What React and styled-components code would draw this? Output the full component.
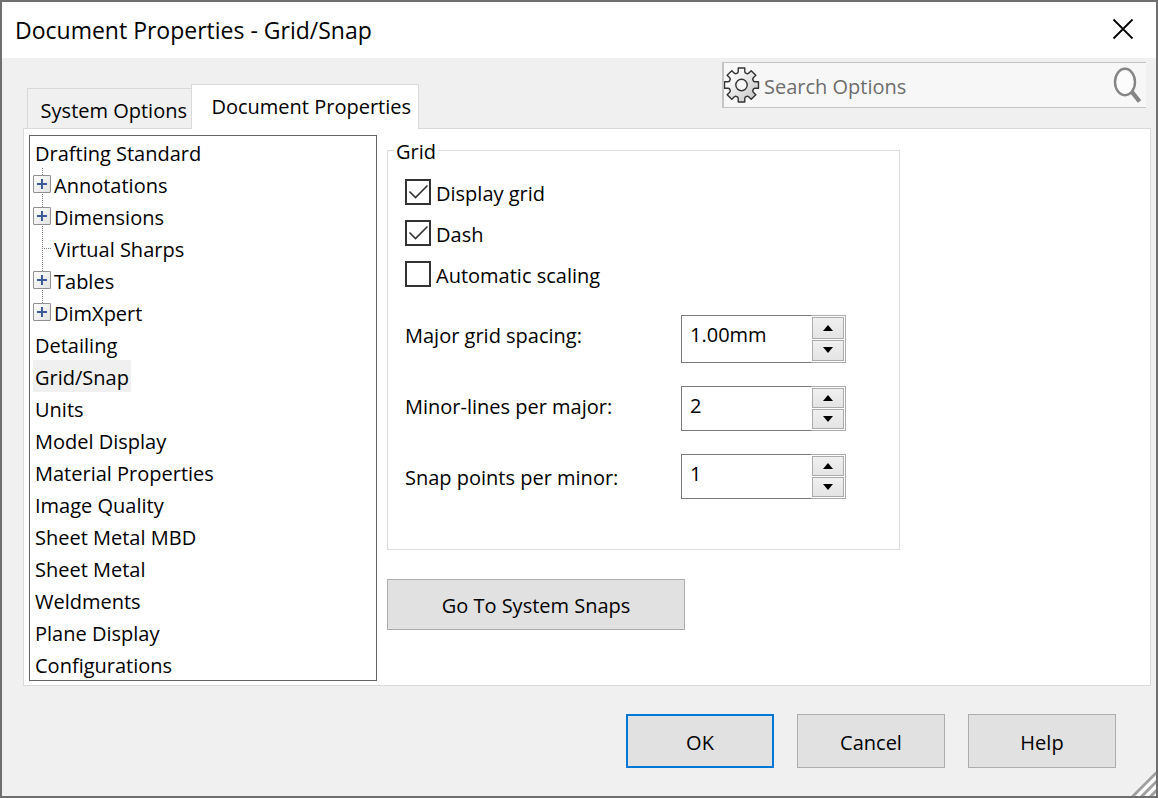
import React, { useState } from "react";
import styled, { createGlobalStyle } from "styled-components";

const GlobalStyle = createGlobalStyle`
  *, *::before, *::after { box-sizing: border-box; }
  body { margin: 0; background: #f0f0f0; }
  body, button, input {
    font-family: "Open Sans", "Noto Sans", sans-serif;
    font-size: 20px;
    line-height: 28px;
    color: #000;
  }
`;

const Dialog = styled.main`
  position: relative;
  display: flex;
  flex-direction: column;
  min-height: 100vh;
  border: 2px solid #6f6f6f;
  background: #f0f0f0;
`;

const TitleBar = styled.header`
  display: flex;
  align-items: center;
  justify-content: space-between;
  height: 56px;
  padding: 0 20px 0 13px;
  background: #fff;
`;

const Title = styled.h1`
  margin: 0;
  font-size: 23px;
  font-weight: 400;
`;

const CloseButton = styled.button`
  display: flex;
  padding: 2px 2px 4px;
  border: 0;
  background: none;
`;

const Strip = styled.div`
  display: flex;
  align-items: flex-end;
  justify-content: space-between;
  height: 70px;
  padding: 0 10px 0 25px;
`;

const Tabs = styled.div`
  display: flex;
  align-items: flex-end;
`;

const Tab = styled.button`
  position: relative;
  flex: none;
  width: ${(p) => (p.$active ? 228 : 164)}px;
  height: ${(p) => (p.$active ? 45 : 40)}px;
  margin-bottom: ${(p) => (p.$active ? -1 : 0)}px;
  padding: ${(p) => (p.$active ? "0 7px 0 0" : "4px 4px 0 0")};
  border: 1px solid #d9d9d9;
  border-bottom: 0;
  border-right-width: ${(p) => (p.$active ? 1 : 0)}px;
  background: ${(p) => (p.$active ? "#fff" : "#f0f0f0")};
  text-align: right;
  white-space: nowrap;
`;

const Search = styled.label`
  display: flex;
  align-items: center;
  align-self: flex-start;
  width: 424px;
  height: 46px;
  margin-top: 4px;
  padding-right: 4px;
  border: 1px solid #c4c4c4;
  border-left-width: 2px;
  border-right: 0;
  background: #f7f7f7;
`;

const SearchInput = styled.input`
  flex: 1;
  min-width: 0;
  margin: 4px 0 0;
  padding: 0 4px;
  border: 0;
  outline: 0;
  background: none;
  &::placeholder { color: #6d6d6d; opacity: 1; }
`;

const Panel = styled.section`
  display: flex;
  gap: 10px;
  margin: 0 5px 0 21px;
  padding: 6px 5px 4px;
  border: 1px solid #d9d9d9;
  background: #fff;
`;

const Tree = styled.ul`
  flex: none;
  width: 348px;
  margin: 0;
  padding: 0 3px;
  border: 1px solid #646464;
  list-style: none;
`;

const TreeRow = styled.li`
  display: flex;
  height: 32px;
`;

const Branch = styled.span`
  display: grid;
  flex: none;
  align-items: center;
  width: 19px;
  background:
    repeating-linear-gradient(to bottom, #808080 0 1px, transparent 1px 2px) 9px 0 / 1px ${(p) => (p.$last ? "50%" : "100%")} no-repeat,
    repeating-linear-gradient(to right, #808080 0 1px, transparent 1px 2px) 9px 16px / 10px 1px no-repeat;
`;

const Expander = styled.button`
  display: flex;
  align-items: center;
  justify-content: center;
  width: 18px;
  height: 18px;
  padding: 0;
  border: 1px solid #919191;
  border-radius: 1px;
  background: linear-gradient(135deg, #fff, #e2e2e2);
`;

const TreeLabel = styled.button`
  padding: 4px 2px 0;
  border: 0;
  background: ${(p) => (p.$selected ? "#f0f0f0" : "none")};
  white-space: nowrap;
`;

const Settings = styled.div`
  flex: 1;
  min-width: 0;
`;

const Group = styled.fieldset`
  width: 513px;
  max-width: 100%;
  margin: 0 0 29px;
  padding: 6px 17px 50px;
  border: 1px solid #dcdcdc;
`;

const Legend = styled.legend`
  margin-left: -11px;
  padding: 4px 2px 0;
  line-height: 26px;
`;

const CheckRow = styled.label`
  display: flex;
  align-items: center;
  gap: 5px;
  height: 41px;
`;

const CheckMark = styled.span`
  display: grid;
  width: 26px;
  height: 26px;
  > * { grid-area: 1 / 1; }
`;

const CheckInput = styled.input`
  appearance: none;
  width: 26px;
  height: 26px;
  margin: 0;
  border: 2px solid #333;
  background: #fff;
`;

const CheckText = styled.span`
  padding-top: 4px;
`;

const Spins = styled.div`
  display: flex;
  margin-top: 21px;
`;

const SpinLabels = styled.div`
  display: flex;
  flex-direction: column;
  gap: 43px;
  width: 276px;
  padding-top: 7px;
`;

const SpinFields = styled.div`
  display: flex;
  flex-direction: column;
  gap: 23px;
`;

const Spin = styled.div`
  display: flex;
  width: 165px;
  height: ${(p) => (p.$tall ? 48 : 45)}px;
`;

const SpinInput = styled.input`
  flex: 1;
  min-width: 0;
  padding: 0 8px ${(p) => (p.$tall ? 9 : 6)}px;
  border: 1px solid #7a7a7a;
  border-right: 0;
  outline: 0;
  background: #fff;
`;

const SpinButtons = styled.div`
  display: flex;
  flex-direction: column;
  gap: 1px;
  width: 35px;
  padding: 1px;
  border: 1px solid #ababab;
  border-left: 0;
`;

const SpinButton = styled.button`
  display: flex;
  flex: 1;
  align-items: center;
  justify-content: center;
  padding: 0;
  border: 1px solid #ababab;
  background: linear-gradient(#f0f0f0, #e4e4e4);
`;

const Button = styled.button`
  width: ${(p) => (p.$wide ? 298 : 148)}px;
  height: ${(p) => (p.$wide ? 51 : 54)}px;
  padding: 3px 0 0;
  border: ${(p) => (p.$primary ? "2px solid #0078d7" : "1px solid #adadad")};
  background: #e1e1e1;
`;

const Footer = styled.footer`
  display: flex;
  justify-content: flex-end;
  gap: 23px;
  padding: 28px 40px;
`;

const Grip = styled.svg`
  position: absolute;
  right: 0;
  bottom: 0;
`;

const items = [
  { name: "Drafting Standard" },
  { name: "Annotations", child: true, expandable: true },
  { name: "Dimensions", child: true, expandable: true },
  { name: "Virtual Sharps", child: true },
  { name: "Tables", child: true, expandable: true },
  { name: "DimXpert", child: true, expandable: true, last: true },
  { name: "Detailing" },
  { name: "Grid/Snap" },
  { name: "Units" },
  { name: "Model Display" },
  { name: "Material Properties" },
  { name: "Image Quality" },
  { name: "Sheet Metal MBD" },
  { name: "Sheet Metal" },
  { name: "Weldments" },
  { name: "Plane Display" },
  { name: "Configurations" },
];

const checks = [
  { label: "Display grid", on: true },
  { label: "Dash", on: true },
  { label: "Automatic scaling", on: false },
];

const spins = [
  { id: "major", label: "Major grid spacing:", value: "1.00mm", tall: true },
  { id: "minor", label: "Minor-lines per major:", value: "2" },
  { id: "snap", label: "Snap points per minor:", value: "1" },
];

function GearIcon() {
  // Eight teeth, generated around the centre of the icon.
  const points = [];
  for (let i = 0; i < 8; i++) {
    const base = (i * Math.PI) / 4 - Math.PI / 2;
    [[-0.3, 12.6], [-0.24, 13.8], [-0.19, 17.3], [0.19, 17.3], [0.24, 13.8], [0.3, 12.6]].forEach(([a, r]) => {
      points.push(`${(17.5 + r * Math.cos(base + a)).toFixed(2)},${(18 + r * Math.sin(base + a)).toFixed(2)}`);
    });
  }
  return (
    <svg width="36" height="36" viewBox="0 0 36 36" aria-hidden="true">
      <defs>
        <linearGradient id="gear" x1="0" y1="0" x2="1" y2="1">
          <stop offset="0.2" stopColor="#fff" />
          <stop offset="0.8" stopColor="#cfcfcf" />
        </linearGradient>
      </defs>
      <polygon points={points.join(" ")} fill="url(#gear)" stroke="#333" strokeWidth="1.4" strokeLinejoin="round" />
      <circle cx="17.5" cy="18" r="5.7" fill="#f7f7f7" stroke="#333" strokeWidth="1.4" />
    </svg>
  );
}

function SearchIcon() {
  return (
    <svg width="30" height="38" viewBox="0 0 30 38" aria-hidden="true">
      <ellipse cx="13" cy="16" rx="10" ry="13.2" fill="#fcfcfc" stroke="#858585" strokeWidth="2.4" />
      <path d="M20 26 L27.5 35.5" stroke="#858585" strokeWidth="4.4" />
    </svg>
  );
}

function Check({ label, on }) {
  const [checked, setChecked] = useState(on);
  return (
    <CheckRow>
      <CheckMark>
        <CheckInput type="checkbox" checked={checked} onChange={() => setChecked(!checked)} />
        {checked && (
          <svg width="26" height="26" viewBox="0 0 26 26" pointerEvents="none" aria-hidden="true">
            <path d="M4.5 12.5 L10.5 18.5 L22.5 6.5" fill="none" stroke="#333" strokeWidth="1.6" />
          </svg>
        )}
      </CheckMark>
      <CheckText>{label}</CheckText>
    </CheckRow>
  );
}

export default function App() {
  const [selected, setSelected] = useState("Grid/Snap");
  return (
    <Dialog>
      <GlobalStyle />
      <TitleBar>
        <Title>Document Properties - Grid/Snap</Title>
        <CloseButton aria-label="Close">
          <svg width="22" height="22" viewBox="0 0 22 22" aria-hidden="true">
            <path d="M1.5 1.5 L20.5 20.5 M20.5 1.5 L1.5 20.5" stroke="#000" strokeWidth="1.8" />
          </svg>
        </CloseButton>
      </TitleBar>
      <Strip>
        <Tabs role="tablist">
          <Tab role="tab" aria-selected="false">System Options</Tab>
          <Tab role="tab" aria-selected="true" $active>Document Properties</Tab>
        </Tabs>
        <Search>
          <GearIcon />
          <SearchInput type="text" placeholder="Search Options" aria-label="Search Options" />
          <SearchIcon />
        </Search>
      </Strip>
      <Panel>
        <Tree>
          {items.map((item) => (
            <TreeRow key={item.name}>
              {item.child && (
                <Branch $last={item.last}>
                  {item.expandable && (
                    <Expander aria-label={`Expand ${item.name}`}>
                      <svg width="10" height="10" viewBox="0 0 10 10" aria-hidden="true">
                        <path d="M5 0 V10 M0 5 H10" stroke="#3c5a9e" strokeWidth="2" />
                      </svg>
                    </Expander>
                  )}
                </Branch>
              )}
              <TreeLabel $selected={item.name === selected} onClick={() => setSelected(item.name)}>
                {item.name}
              </TreeLabel>
            </TreeRow>
          ))}
        </Tree>
        <Settings>
          <Group>
            <Legend>Grid</Legend>
            {checks.map((check) => (
              <Check key={check.label} {...check} />
            ))}
            <Spins>
              <SpinLabels>
                {spins.map((spin) => (
                  <label key={spin.id} htmlFor={spin.id}>{spin.label}</label>
                ))}
              </SpinLabels>
              <SpinFields>
                {spins.map((spin) => (
                  <Spin key={spin.id} $tall={spin.tall}>
                    <SpinInput id={spin.id} type="text" defaultValue={spin.value} $tall={spin.tall} />
                    <SpinButtons>
                      <SpinButton aria-label={`Increase ${spin.label}`}>
                        <svg width="10" height="6" viewBox="0 0 10 6" aria-hidden="true">
                          <path d="M5 0 L10 6 H0 Z" />
                        </svg>
                      </SpinButton>
                      <SpinButton aria-label={`Decrease ${spin.label}`}>
                        <svg width="10" height="6" viewBox="0 0 10 6" aria-hidden="true">
                          <path d="M0 0 H10 L5 6 Z" />
                        </svg>
                      </SpinButton>
                    </SpinButtons>
                  </Spin>
                ))}
              </SpinFields>
            </Spins>
          </Group>
          <Button $wide>Go To System Snaps</Button>
        </Settings>
      </Panel>
      <Footer>
        <Button $primary>OK</Button>
        <Button>Cancel</Button>
        <Button>Help</Button>
      </Footer>
      <Grip width="26" height="26" viewBox="0 0 26 26" aria-hidden="true">
        <path d="M0 26 L26 0 V26 Z" fill="#fff" />
        <path d="M2 27 L27 2 M11 27 L27 11 M20 27 L27 20" stroke="#a0a0a0" strokeWidth="3" />
      </Grip>
    </Dialog>
  );
}
